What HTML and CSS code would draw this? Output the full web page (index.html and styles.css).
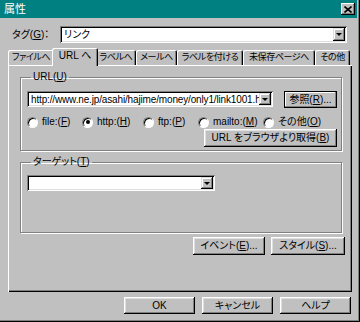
FILE: index.html
```html
<!DOCTYPE html>
<html lang="ja">
<head>
    <meta charset="UTF-8">
    <title>属性</title>
    <link rel="stylesheet" href="styles.css">
</head>
<body>
    <div class="window">
        <div class="titlebar">
            <span class="title">属性</span>
            <span class="close">
                <svg width="8" height="7" viewBox="0 0 8 7"><path d="M0.5 0.5 L7.5 6.5 M7.5 0.5 L0.5 6.5" stroke="#000" stroke-width="1.6"/></svg>
            </span>
        </div>

        <div class="content">
            <div class="tag-row">
                <label class="tag-label">タグ(<u>G</u>)：</label>
                <div class="combo tag-combo">
                    <span class="combo-text">リンク</span>
                    <span class="drop"></span>
                </div>
            </div>

            <div class="tabs">
                <div class="tab t-file">ファイルへ</div>
                <div class="tab t-url active">URL へ</div>
                <div class="tab t-label">ラベルへ</div>
                <div class="tab t-mail">メールへ</div>
                <div class="tab t-mark">ラベルを付ける</div>
                <div class="tab t-unsaved">未保存ページへ</div>
                <div class="tab t-other">その他</div>
            </div>

            <div class="panel">
                <fieldset class="group url-group">
                    <legend>URL(<u>U</u>)</legend>
                    <div class="url-row">
                        <div class="combo url-combo">
                            <span class="combo-text url-text">http://www.ne.jp/asahi/hajime/money/only1/link1001.htm</span>
                            <span class="drop"></span>
                        </div>
                        <button class="btn btn-default browse-btn">参照(<u>R</u>)...</button>
                    </div>
                    <div class="radios">
                        <span class="radio r-file"><span class="dot"></span><span>file:(<u>F</u>)</span></span>
                        <span class="radio r-http"><span class="dot checked"></span><span>http:(<u>H</u>)</span></span>
                        <span class="radio r-ftp"><span class="dot"></span><span>ftp:(<u>P</u>)</span></span>
                        <span class="radio r-mail"><span class="dot"></span><span>mailto:(<u>M</u>)</span></span>
                        <span class="radio"><span class="dot"></span><span>その他(<u>O</u>)</span></span>
                    </div>
                    <div class="fetch-row">
                        <button class="btn fetch-btn">URL をブラウザより取得(<u>B</u>)</button>
                    </div>
                </fieldset>

                <fieldset class="group target-group">
                    <legend>ターゲット(<u>T</u>)</legend>
                    <div class="combo target-combo">
                        <span class="combo-text"></span>
                        <span class="drop"></span>
                    </div>
                </fieldset>

                <div class="panel-buttons">
                    <button class="btn event-btn">イベント(<u>E</u>)...</button>
                    <button class="btn style-btn">スタイル(<u>S</u>)...</button>
                </div>
            </div>

            <div class="footer">
                <button class="btn footer-btn">OK</button>
                <button class="btn footer-btn">キャンセル</button>
                <button class="btn footer-btn">ヘルプ</button>
            </div>
        </div>
    </div>
</body>
</html>
```

FILE: styles.css
```css
* {
    margin: 0;
    padding: 0;
    box-sizing: border-box;
}

body {
    font-family: "Liberation Sans", "Noto Sans CJK JP", sans-serif;
    font-size: 10px;
    font-feature-settings: "palt";
    color: #000;
    background: #c0c0c0;
}

u {
    text-decoration: underline;
}

.window {
    width: 360px;
    height: 322px;
    padding-right: 3px;
    background: #c0c0c0;
    box-shadow: inset -1px -1px #000, inset -2px -2px #808080;
}

/* title bar */
.titlebar {
    height: 18px;
    background: #008080;
    display: flex;
    align-items: center;
    justify-content: space-between;
    padding: 0 2px 0 4px;
}

.title {
    color: #fff;
    font-size: 11px;
    line-height: 14px;
}

.close {
    width: 14px;
    height: 12px;
    background: #c0c0c0;
    display: flex;
    align-items: center;
    justify-content: center;
    box-shadow: inset -1px -1px #000, inset 1px 1px #fff, inset -2px -2px #808080;
}

.content {
    padding: 8px 0 0 8px;
}

/* combo boxes */
.tag-row {
    display: flex;
    align-items: center;
    padding-left: 4px;
}

.tag-label {
    width: 48px;
    line-height: 12px;
}

.combo {
    display: flex;
    height: 17px;
    padding: 2px;
    background: #fff;
    box-shadow: inset 1px 1px #808080, inset -1px -1px #fff, inset 2px 2px #000, inset -2px -2px #dfdfdf;
}

.combo-text {
    flex: 1;
    padding-left: 2px;
    line-height: 13px;
    white-space: nowrap;
    overflow: hidden;
}

.url-text {
    letter-spacing: -0.15px;
}

.drop {
    width: 12px;
    display: flex;
    align-items: center;
    justify-content: center;
    background: #c0c0c0;
    box-shadow: inset -1px -1px #000, inset 1px 1px #dfdfdf, inset -2px -2px #808080, inset 2px 2px #fff;
}

.drop::after {
    content: "";
    border-left: 3px solid transparent;
    border-right: 3px solid transparent;
    border-top: 3px solid #000;
}

.tag-combo {
    width: 287px;
}

.url-combo {
    width: 246px;
    height: 16px;
}

.target-combo {
    width: 188px;
    height: 16px;
    margin-top: 7px;
}

/* tabs */
.tabs {
    display: flex;
    align-items: flex-end;
    height: 17px;
    margin-top: 5px;
}

.tab {
    height: 15px;
    font-size: 9px;
    letter-spacing: -0.4px;
    line-height: 14px;
    text-align: center;
    border-radius: 2px 2px 0 0;
    background: #c0c0c0;
    box-shadow: inset 1px 1px #fff, inset -1px 0 #000, inset -2px 0 #808080;
    white-space: nowrap;
    overflow: hidden;
}

.t-file { width: 46px; }
.t-url { width: 42px; }
.t-label { width: 40px; }
.t-mail { width: 41px; }
.t-mark { width: 66px; }
.t-unsaved { width: 72px; }
.t-other { width: 35px; }

.tab.active {
    position: relative;
    z-index: 1;
    width: 46px;
    height: 18px;
    margin: 0 -2px -1px;
    font-size: 10px;
    letter-spacing: 0;
    line-height: 16px;
}

.panel {
    width: 344px;
    height: 227px;
    padding: 6px 10px 0 12px;
    box-shadow: inset 1px 1px #fff, inset -1px -1px #000, inset -2px -2px #808080;
}

/* group boxes */
.group {
    border: 1px solid #808080;
    box-shadow: inset 1px 1px #fff, 1px 1px #fff;
    padding: 0 4px 0 6px;
}

.group legend {
    margin-left: 4px;
    padding: 0 2px;
    line-height: 12px;
}

.url-group {
    height: 80px;
}

.target-group {
    height: 77px;
    margin-top: 5px;
}

.url-row {
    display: flex;
    align-items: flex-start;
    margin-top: 8px;
}

.radios {
    display: flex;
    align-items: center;
    height: 12px;
    margin-top: 8px;
}

.radio {
    display: flex;
    align-items: center;
    gap: 4px;
    line-height: 12px;
    white-space: nowrap;
}

.r-file { width: 55px; }
.r-http { width: 61px; }
.r-ftp { width: 55px; }
.r-mail { width: 65px; }

.dot {
    width: 11px;
    height: 11px;
    border-radius: 50%;
    background: #fff;
    border: 1px solid;
    border-color: #808080 #fff #fff #808080;
    box-shadow: inset 1px 1px #000;
    display: flex;
    align-items: center;
    justify-content: center;
}

.dot.checked::after {
    content: "";
    width: 4px;
    height: 4px;
    border-radius: 50%;
    background: #000;
}

.fetch-row {
    display: flex;
    justify-content: flex-end;
    margin-top: 1px;
}

/* buttons */
.btn {
    font: inherit;
    color: #000;
    background: #c0c0c0;
    border: none;
    height: 18px;
    line-height: 14px;
    white-space: nowrap;
    box-shadow: inset -1px -1px #000, inset 1px 1px #fff, inset -2px -2px #808080, inset 2px 2px #dfdfdf;
}

.btn-default {
    box-shadow: inset 0 0 0 1px #000, inset -2px -2px #808080, inset 2px 2px #fff;
}

.browse-btn {
    width: 53px;
    height: 17px;
    margin-left: 11px;
}

.fetch-btn {
    width: 133px;
}

.panel-buttons {
    display: flex;
    justify-content: flex-end;
    gap: 6px;
    margin: 4px -3px 0 0;
}

.event-btn {
    width: 72px;
}

.style-btn {
    width: 74px;
}

.footer {
    display: flex;
    justify-content: flex-end;
    gap: 7px;
    width: 344px;
    margin-top: 5px;
    padding-right: 1px;
}

.footer-btn {
    width: 71px;
    height: 17px;
}
```
